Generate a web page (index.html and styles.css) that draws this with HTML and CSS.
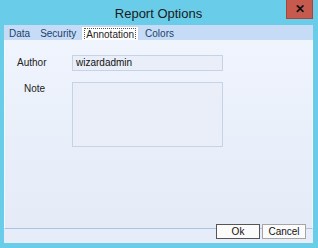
FILE: index.html
```html
<!DOCTYPE html>
<html lang="en">
<head>
  <meta charset="UTF-8" />
  <title>Report Options</title>
  <link rel="stylesheet" href="styles.css">
</head>
<body>
  <div class="window">
    <div class="titlebar">
      <span class="title">Report Options</span>
      <div class="close">&#10005;</div>
    </div>
    <div class="client">
      <div class="tabs">
        <div class="tab">Data</div>
        <div class="tab">Security</div>
        <div class="tab active"><span>Annotation</span></div>
        <div class="tab after-active">Colors</div>
      </div>
      <div class="panel">
        <div class="row">
          <label class="lbl">Author</label>
          <div class="field">wizardadmin</div>
        </div>
        <div class="row">
          <label class="lbl note-lbl">Note</label>
          <div class="field note"></div>
        </div>
      </div>
      <div class="buttons">
        <button class="btn default">Ok</button>
        <button class="btn">Cancel</button>
      </div>
    </div>
  </div>
</body>
</html>
```

FILE: styles.css
```css
body {
    margin: 0;
    font-family: "Liberation Sans", Arial, sans-serif;
}

.window {
    width: 318px;
    height: 248px;
    background-color: #69cde9;
    display: flex;
    flex-direction: column;
    box-sizing: border-box;
    padding: 0 5px 5px 4px;
}

.titlebar {
    height: 25px;
    display: flex;
    align-items: center;
    justify-content: center;
    position: relative;
}

.title {
    font-size: 13px;
    color: #1a1a1a;
    margin-top: 1px;
}

.close {
    position: absolute;
    right: 0;
    top: 0;
    width: 27px;
    height: 19px;
    background-color: #c75a4f;
    border: 1px solid #a64538;
    border-top: none;
    box-sizing: border-box;
    color: #111;
    font-size: 12px;
    font-weight: bold;
    display: flex;
    align-items: center;
    justify-content: center;
}

.client {
    flex: 1;
    display: flex;
    flex-direction: column;
    background-color: #e6edf8;
}

.tabs {
    height: 15px;
    background-color: #c6dcf6;
    display: flex;
    align-items: flex-end;
    padding-left: 5px;
    font-size: 10px;
    color: #1f3f6a;
}

.tab {
    height: 14px;
    line-height: 15px;
}

.tab + .tab {
    margin-left: 10px;
}

.tab.active {
    background-color: #fff;
    border: 1px solid #cbd6e6;
    border-bottom: none;
    box-sizing: border-box;
    padding: 1px 2px 0;
    margin-left: 5px;
    color: #222;
    display: flex;
    align-items: center;
}

.tab.active span {
    border: 1px dotted #555;
    line-height: 11px;
    padding: 0 1px;
}

.tab.after-active {
    margin-left: 6px;
}

.panel {
    height: 189px;
    background: linear-gradient(#eff4fd, #e4ebf7);
    border-left: 1px solid #f4f7fc;
    border-right: 1px solid #f4f7fc;
    border-bottom: 1px solid #a9c3e6;
    box-sizing: border-box;
    padding-top: 15px;
}

.row {
    display: flex;
    align-items: flex-start;
    margin-bottom: 11px;
}

.lbl {
    width: 67px;
    padding-left: 12px;
    box-sizing: border-box;
    font-size: 10px;
    color: #222;
    line-height: 16px;
}

.note-lbl {
    padding-left: 19px;
    line-height: 14px;
}

.field {
    width: 151px;
    height: 16px;
    border: 1px solid #c5d3e6;
    background-color: #e9eef8;
    box-sizing: border-box;
    font-size: 10px;
    line-height: 14px;
    padding-left: 3px;
    color: #111;
}

.field.note {
    height: 65px;
}

.buttons {
    flex: 1;
    display: flex;
    justify-content: flex-end;
    align-items: flex-start;
    gap: 2px;
    padding-right: 7px;
    margin-top: -5px;
}

.btn {
    width: 44px;
    height: 15px;
    font-family: "Liberation Sans", Arial, sans-serif;
    font-size: 10px;
    color: #111;
    background-color: #fbfbfb;
    border: 1px solid #a5a5a5;
    padding: 0;
    line-height: 13px;
}

.btn.default {
    border: 1px solid #555;
}
```
